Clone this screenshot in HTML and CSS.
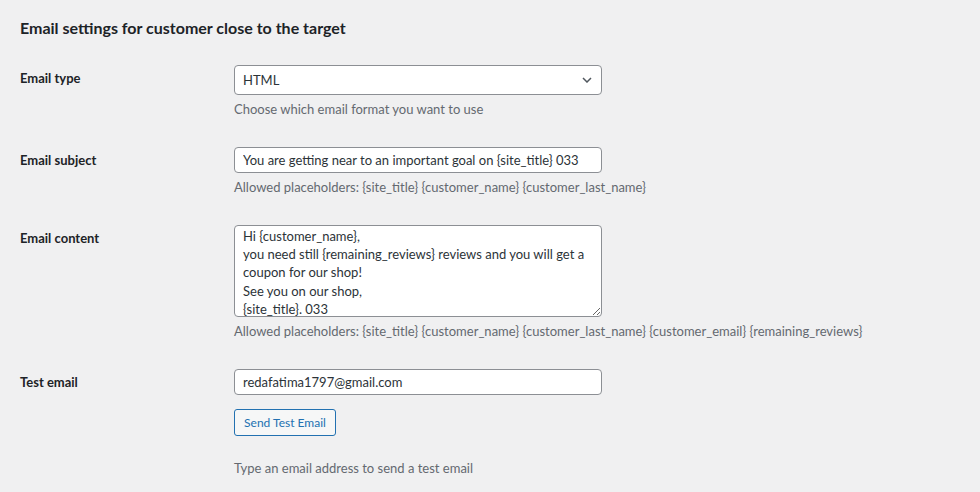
FILE: index.html
```html
<!DOCTYPE html>
<html lang="en">
<head>
<meta charset="utf-8">
<title>Email settings</title>
<link rel="stylesheet" href="styles.css">
</head>
<body>
<div class="wrap">
  <h2 class="title">Email settings for customer close to the target</h2>
  <div class="form">
    <div class="row">
      <div class="label">Email type</div>
      <div class="field">
        <div class="select">
          <span>HTML</span>
          <svg class="chev" width="10" height="6" viewBox="0 0 10 6"><path d="M1 1l4 4 4-4" fill="none" stroke="#50575e" stroke-width="1.5"/></svg>
        </div>
        <p class="desc">Choose which email format you want to use</p>
      </div>
    </div>
    <div class="row">
      <div class="label">Email subject</div>
      <div class="field">
        <input class="input" type="text" value="You are getting near to an important goal on {site_title} 033">
        <p class="desc">Allowed placeholders: {site_title} {customer_name} {customer_last_name}</p>
      </div>
    </div>
    <div class="row">
      <div class="label">Email content</div>
      <div class="field">
        <textarea class="textarea">Hi {customer_name},
you need still {remaining_reviews} reviews and you will get a coupon for our shop!
See you on our shop,
{site_title}. 033</textarea>
        <p class="desc">Allowed placeholders: {site_title} {customer_name} {customer_last_name} {customer_email} {remaining_reviews}</p>
      </div>
    </div>
    <div class="row">
      <div class="label">Test email</div>
      <div class="field">
        <input class="input" type="text" value="redafatima1797@gmail.com">
        <div class="btnrow"><button class="button" type="button">Send Test Email</button></div>
        <p class="desc desc-far">Type an email address to send a test email</p>
      </div>
    </div>
  </div>
</div>
</body>
</html>
```

FILE: styles.css
```css
html, body {
  margin: 0;
  padding: 0;
  background: #f0f0f1;
}
body {
  font-family: Lato, "Liberation Sans", sans-serif;
  font-size: 13px;
  color: #1d2327;
}
.wrap {
  padding: 17px 20px 0 20px;
}
.title {
  margin: 0 0 11px 0;
  font-size: 16px;
  line-height: 22px;
  font-weight: 700;
  color: #1d2327;
}
.row {
  display: grid;
  grid-template-columns: 214px 1fr;
}
.label {
  padding-top: 19px;
  line-height: 18px;
  font-weight: 700;
  font-size: 13px;
  color: #1d2327;
}
.field {
  padding: 15px 0 13px 0;
  display: flex;
  flex-direction: column;
  align-items: flex-start;
}
.row-content .field {
  padding-top: 14px;
}
.select {
  box-sizing: border-box;
  width: 368px;
  height: 30px;
  border: 1px solid #8c8f94;
  border-radius: 4px;
  background: #fff;
  display: flex;
  align-items: center;
  justify-content: space-between;
  padding: 0 9px 0 8px;
  color: #2c3338;
  font-size: 13px;
}
.chev {
  display: block;
}
.input {
  box-sizing: border-box;
  width: 368px;
  height: 26px;
  border: 1px solid #8c8f94;
  border-radius: 4px;
  background: #fff;
  padding: 0 8px;
  margin: 0;
  font-family: inherit;
  font-size: 13px;
  color: #2c3338;
  outline: none;
}
.textarea {
  box-sizing: border-box;
  width: 368px;
  height: 92px;
  border: 1px solid #8c8f94;
  border-radius: 4px;
  background: #fff;
  padding: 1px 8px 0 8px;
  margin: 0;
  font-family: inherit;
  font-size: 13px;
  line-height: 18.2px;
  color: #2c3338;
  overflow: hidden;
  resize: vertical;
  outline: none;
  display: block;
}
.desc {
  margin: 4px 0 0 0;
  line-height: 20px;
  color: #646970;
  font-size: 13px;
}
.btnrow {
  margin-top: 14px;
}
.button {
  box-sizing: border-box;
  height: 27px;
  width: 102px;
  padding: 0;
  border: 1px solid #2271b1;
  border-radius: 3px;
  background: #f6f7f7;
  color: #2271b1;
  font-family: inherit;
  font-size: 12px;
  cursor: pointer;
  display: block;
}
.desc-far {
  margin-top: 22px;
}
```
